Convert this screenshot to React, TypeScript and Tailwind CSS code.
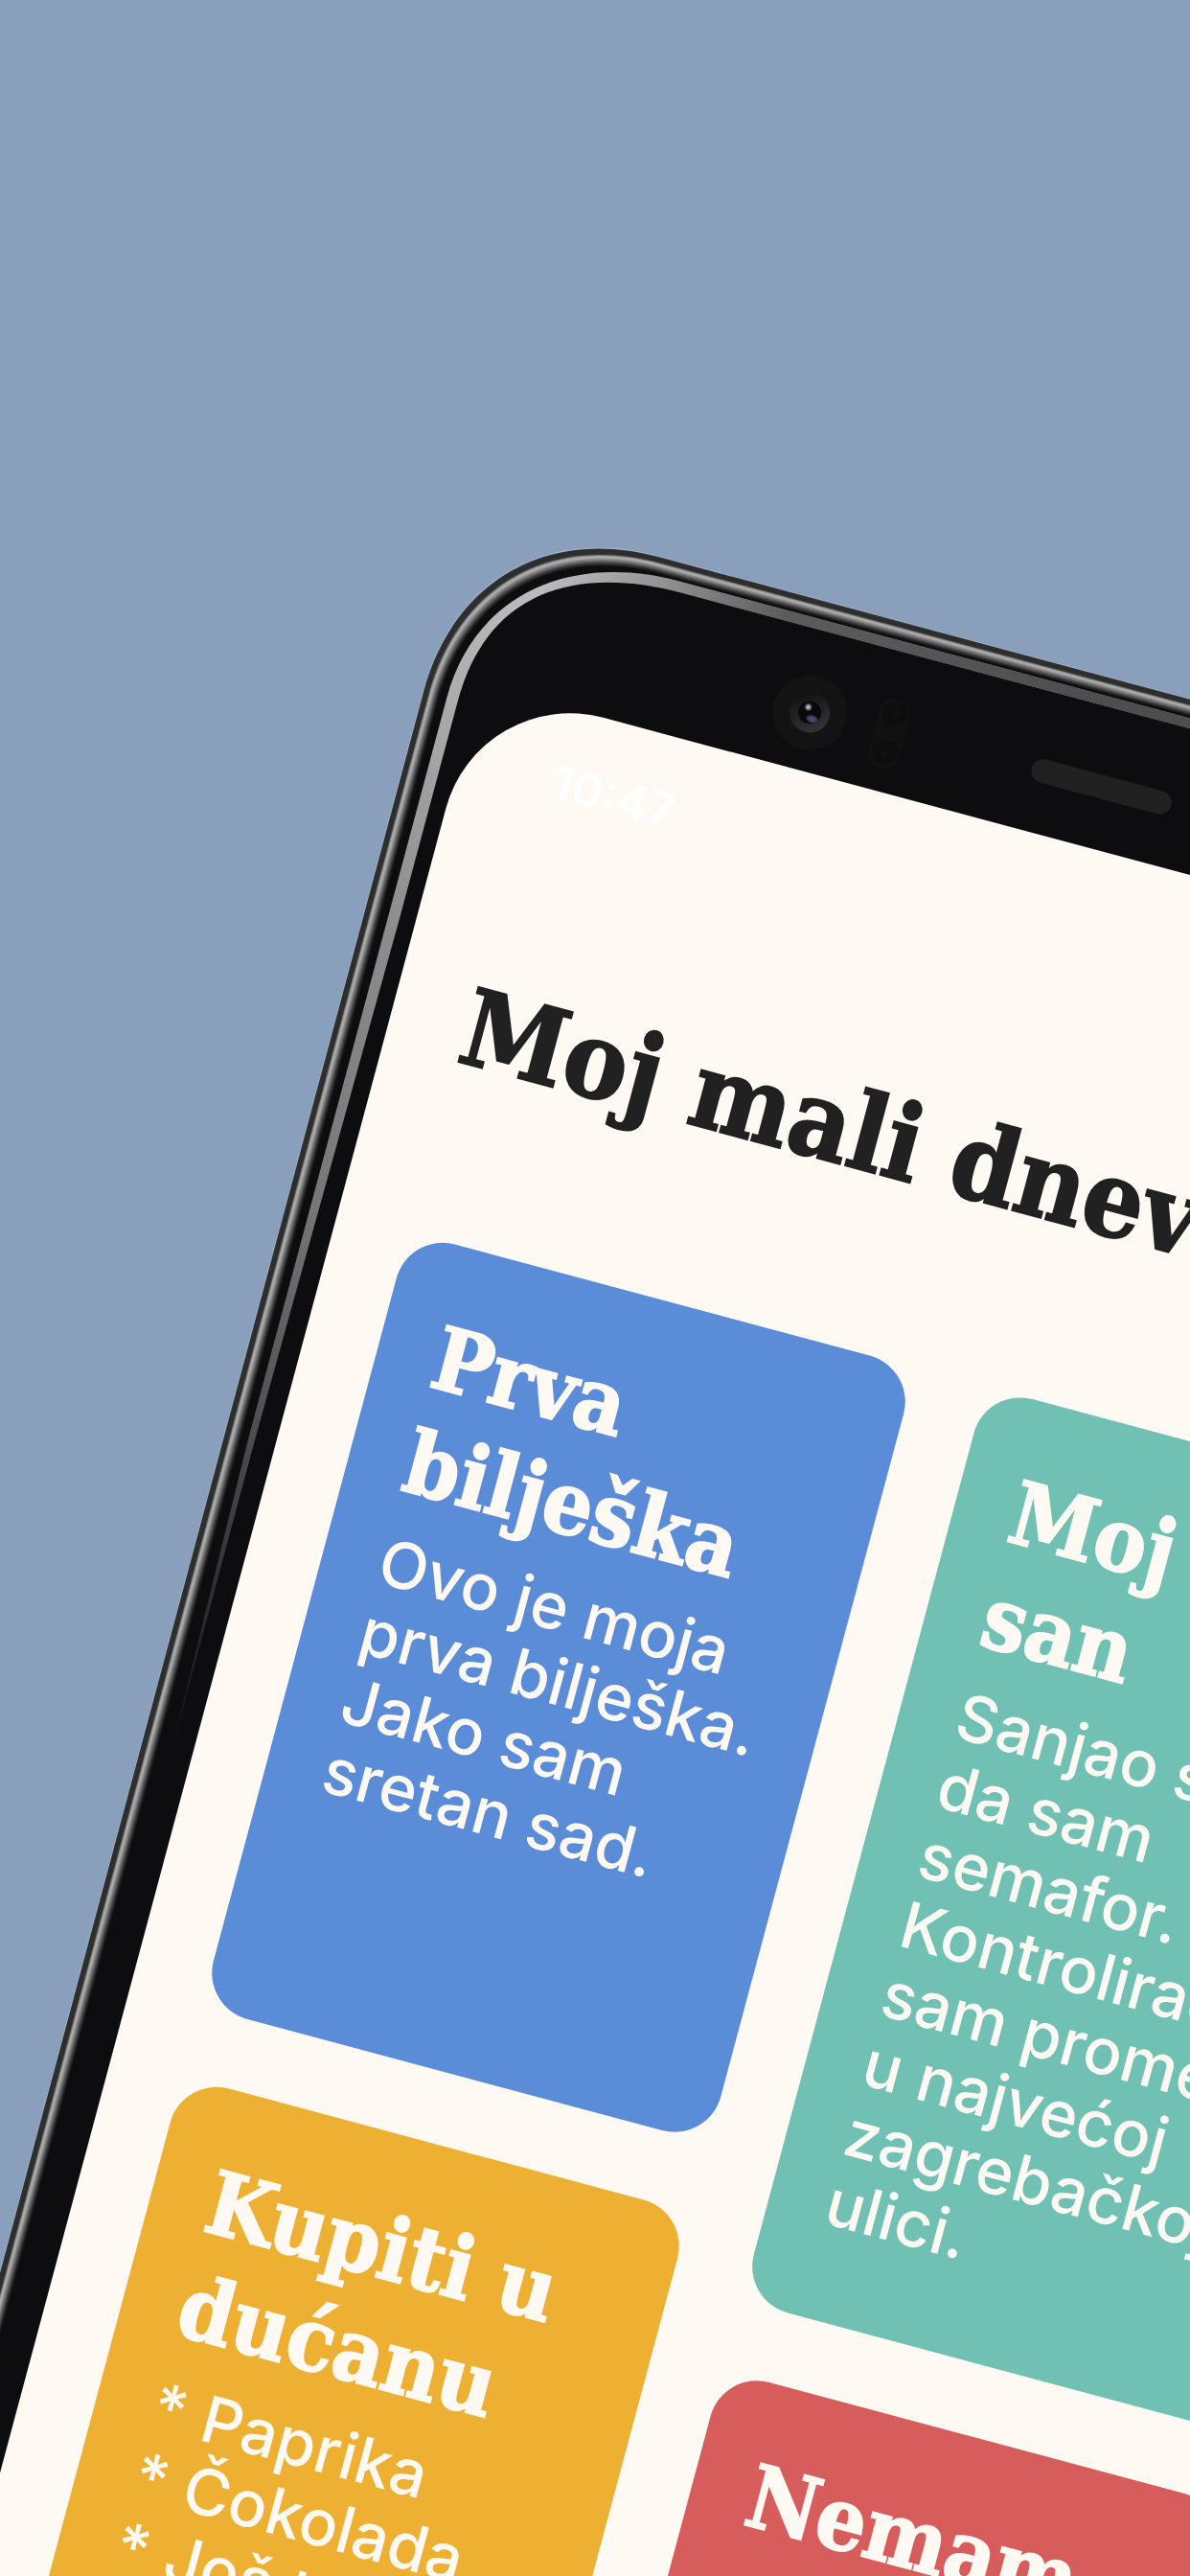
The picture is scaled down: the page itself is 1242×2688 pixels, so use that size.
type Note = {
  title: string[];
  lines: string[];
  tone: string;
};

const leftNotes: Note[] = [
  {
    title: ["Prva", "bilješka"],
    lines: ["Ovo je moja", "prva bilješka.", "Jako sam", "sretan sad."],
    tone: "bg-[#5b8cd8]",
  },
  {
    title: ["Kupiti u", "dućanu"],
    lines: ["* Paprika", "* Čokolada", "* Još toga"],
    tone: "bg-[#edb033]",
  },
];

const rightNotes: Note[] = [
  {
    title: ["Moj mali", "san"],
    lines: [
      "Sanjao sam",
      "da sam",
      "semafor.",
      "Kontrolirao",
      "sam promet",
      "u najvećoj",
      "zagrebačkoj",
      "ulici.",
    ],
    tone: "bg-[#71c0b4]",
  },
  {
    title: ["Nemam"],
    lines: [],
    tone: "bg-[#d75c5c]",
  },
];

// Metal rim shades, from the outer edge towards the glass.
const rim = [
  "#9fb2c8", "#333333", "#2e2e2e", "#2e2e2e", "#2e2e2e", "#2e2e2e", "#3a3a3a",
  "#808080", "#a6a6a6", "#adadad", "#9a9a9a", "#858585", "#707070", "#5b5b5b",
  "#474747", "#343434", "#242426", "#161618", "#0d0d0f",
];

function rimPath(d: number) {
  const r = 200 - d * 0.6;
  const c = 80 - d * 0.3;
  return `M${d} 2700V${d + r}C${d} ${d + c} ${d + c} ${d} ${d + r} ${d}H1436V2700Z`;
}

function PhoneBody() {
  return (
    <svg
      className="absolute top-0 left-0"
      width="1436"
      height="2700"
      viewBox="0 0 1436 2700"
      aria-hidden="true"
    >
      <defs>
        <linearGradient id="edge" gradientUnits="userSpaceOnUse" x1="0" y1="0" x2="0" y2="1357">
          <stop offset="0" stopColor="#c2c2c2" />
          <stop offset="0.1" stopColor="#b4b4b4" />
          <stop offset="0.32" stopColor="#8e8e8e" />
          <stop offset="0.55" stopColor="#777777" />
          <stop offset="0.74" stopColor="#4c4c4c" />
          <stop offset="1" stopColor="#0d0d0f" />
        </linearGradient>
        <linearGradient id="shade" gradientUnits="userSpaceOnUse" x1="90" y1="0" x2="700" y2="0">
          <stop offset="0" stopColor="#0d0d0f" stopOpacity="0" />
          <stop offset="0.16" stopColor="#0d0d0f" stopOpacity="0.2" />
          <stop offset="0.42" stopColor="#0d0d0f" stopOpacity="0.56" />
          <stop offset="1" stopColor="#0d0d0f" stopOpacity="0.64" />
        </linearGradient>
        <linearGradient id="ring" x1="0.1" y1="0" x2="0.8" y2="1">
          <stop offset="0.1" stopColor="#111112" />
          <stop offset="1" stopColor="#37373a" />
        </linearGradient>
        <radialGradient id="glint">
          <stop offset="0" stopColor="#c9c9c9" />
          <stop offset="0.45" stopColor="#8c8c8c" />
          <stop offset="1" stopColor="#0c0c0e" stopOpacity="0" />
        </radialGradient>
        <radialGradient id="blue">
          <stop offset="0" stopColor="#4a557d" />
          <stop offset="0.6" stopColor="#384062" />
          <stop offset="1" stopColor="#0c0c0e" stopOpacity="0" />
        </radialGradient>
        <pattern id="mesh" width="3" height="3" patternUnits="userSpaceOnUse">
          <rect width="3" height="3" fill="#161616" />
          <rect width="1.5" height="1.5" fill="#2b2b2b" />
          <rect x="1.5" y="1.5" width="1.5" height="1.5" fill="#2b2b2b" />
        </pattern>
      </defs>
      {rim.map((color, i) => (
        <path key={i} d={rimPath(i)} fill={color} />
      ))}
      <g>
        {["url(#edge)", "url(#shade)"].map((fill) => (
          <path
            key={fill}
            fill={fill}
            d="M33 1357L26 1000V200C26 88 112 20 228 20H1436V30L235 31C128 31 38 76 38 200V436L33 1000Z"
          />
        ))}
      </g>
      <circle cx="396" cy="117" r="39" fill="#131313" />
      <circle cx="396" cy="117" r="21" fill="url(#ring)" />
      <circle cx="396" cy="117" r="12" fill="#0a0a0c" />
      <ellipse cx="400" cy="123" rx="8" ry="5" fill="url(#blue)" />
      <circle cx="393" cy="112" r="5" fill="url(#glint)" />
      <rect x="465" y="79" width="33" height="76" rx="16.5" fill="#111111" />
      <circle cx="482" cy="95" r="13" fill="#0d0d0e" />
      <circle cx="482" cy="95" r="5" fill="#101010" />
      <circle cx="482" cy="137" r="13" fill="#0d0d0e" />
      <circle cx="482" cy="137" r="5" fill="#101010" />
      <rect x="635" y="101" width="150" height="24" rx="12" fill="url(#mesh)" stroke="#1f1f1f" />
    </svg>
  );
}

function NoteCard({ note }: { note: Note }) {
  return (
    <article
      className={`min-h-[837px] rounded-[50px] px-[60px] pt-[62px] pb-[87px] text-[#fff9f3] ${note.tone}`}
    >
      <h2 className="font-['DejaVu_Serif_Condensed','DejaVu_Serif',serif] text-[91px] leading-[112px] font-bold [-webkit-text-stroke:2px_currentColor] [font-stretch:condensed]">
        {note.title.map((line) => (
          <span key={line} className="block whitespace-nowrap">
            {line}
          </span>
        ))}
      </h2>
      <p className="mt-3.5 font-['Inter',sans-serif] text-[67px] leading-[75px] font-medium">
        {note.lines.map((line) => (
          <span key={line} className="block whitespace-nowrap">
            {line}
          </span>
        ))}
      </p>
    </article>
  );
}

export default function App() {
  return (
    <main className="relative h-screen overflow-hidden bg-white">
      <div className="absolute inset-x-0 top-0 bottom-[317px] bg-[#8a9fbc]" />
      <div className="relative mt-[528px] ml-[493px] w-[1436px] origin-top-left rotate-[15deg] pt-[178px] pr-[55px] pl-[55px]">
        <PhoneBody />
        <div className="relative rounded-tl-[134px] rounded-tr-[134px] bg-[#fff9f3] px-[77px] pb-[77px]">
          <header className="pt-[47px] pl-6 font-['Inter',sans-serif] text-[49px] leading-[60px] font-semibold text-white">
            <time>10:47</time>
          </header>
          <h1 className="mt-[170px] font-['DejaVu_Serif_Condensed','DejaVu_Serif',serif] text-[111px] leading-[140px] font-bold whitespace-nowrap text-[#212121] [-webkit-text-stroke:2px_currentColor] [font-stretch:condensed]">
            Moj mali dnevnik
          </h1>
          <div className="mt-[154px] grid grid-cols-2 gap-[76px]">
            <div className="flex flex-col gap-[75px]">
              {leftNotes.map((note) => (
                <NoteCard key={note.title[0]} note={note} />
              ))}
            </div>
            <div className="flex flex-col gap-[75px]">
              {rightNotes.map((note) => (
                <NoteCard key={note.title[0]} note={note} />
              ))}
            </div>
          </div>
        </div>
      </div>
    </main>
  );
}
